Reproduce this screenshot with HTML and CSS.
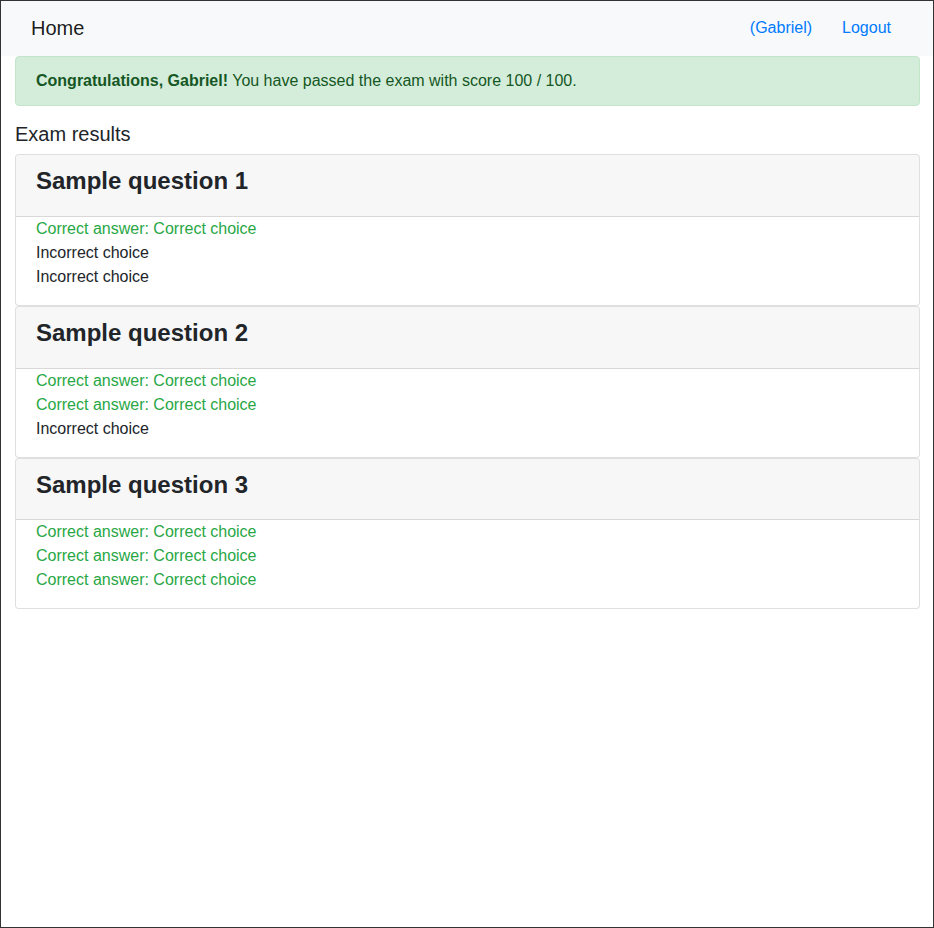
FILE: index.html
```html
<!DOCTYPE html>
<html lang="en">
<head>
<meta charset="utf-8">
<title>Exam results</title>
<link rel="stylesheet" href="styles.css">
</head>
<body>
<nav class="navbar">
  <a class="brand" href="#">Home</a>
  <div class="nav-links">
    <a class="nav-link" href="#">(Gabriel)</a>
    <a class="nav-link" href="#">Logout</a>
  </div>
</nav>
<main class="container">
  <div class="alert"><strong>Congratulations, Gabriel!</strong> You have passed the exam with score 100 / 100.</div>
  <h5 class="section-title">Exam results</h5>
  <div class="card">
    <div class="card-header"><h4 class="question">Sample question 1</h4></div>
    <div class="card-body">
      <div class="choice correct">Correct answer: Correct choice</div>
      <div class="choice">Incorrect choice</div>
      <div class="choice">Incorrect choice</div>
    </div>
  </div>
  <div class="card">
    <div class="card-header"><h4 class="question">Sample question 2</h4></div>
    <div class="card-body">
      <div class="choice correct">Correct answer: Correct choice</div>
      <div class="choice correct">Correct answer: Correct choice</div>
      <div class="choice">Incorrect choice</div>
    </div>
  </div>
  <div class="card">
    <div class="card-header"><h4 class="question">Sample question 3</h4></div>
    <div class="card-body">
      <div class="choice correct">Correct answer: Correct choice</div>
      <div class="choice correct">Correct answer: Correct choice</div>
      <div class="choice correct">Correct answer: Correct choice</div>
    </div>
  </div>
</main>
<div class="frame"></div>
</body>
</html>
```
FILE: styles.css
```css
* { box-sizing: border-box; }
html, body { margin: 0; padding: 0; }
body {
  font-family: "Liberation Sans", Arial, sans-serif;
  font-size: 16px;
  line-height: 1.5;
  color: #212529;
  background: #fff;
  min-height: 928px;
}
a { text-decoration: none; }
.frame {
  position: fixed;
  inset: 0;
  border: 1px solid #333;
  pointer-events: none;
}
.navbar {
  display: flex;
  align-items: center;
  justify-content: space-between;
  background: #f8f9fa;
  padding: 8px 28px 8px 31px;
  height: 56px;
}
.brand {
  font-size: 20px;
  line-height: 30px;
  padding: 5px 0;
  color: rgba(0,0,0,.9);
}
.nav-links { display: flex; }
.nav-link {
  color: #007bff;
  padding: 0 15px;
  line-height: 24px;
}
.container { padding: 0 14px 0 15px; }
.alert {
  background: #d4edda;
  border: 1px solid #c3e6cb;
  color: #155724;
  border-radius: 4px;
  padding: 12px 20px;
  margin-bottom: 16px;
}
.alert strong { font-weight: bold; }
.section-title {
  font-size: 20px;
  font-weight: 400;
  line-height: 1.2;
  margin: 0 0 8px;
}
.card {
  border: 1px solid rgba(0,0,0,.125);
  border-radius: 4px;
  background: #fff;
  overflow: hidden;
}
.card-header {
  background: rgba(0,0,0,.03);
  border-bottom: 1px solid rgba(0,0,0,.125);
  padding: 12px 20px;
}
.question {
  font-size: 24px;
  font-weight: bold;
  line-height: 1.2;
  margin: 0 0 8px;
}
.card-body { padding: 0 20px 16px; }
.choice { line-height: 24px; }
.choice.correct { color: #28a745; }
```
